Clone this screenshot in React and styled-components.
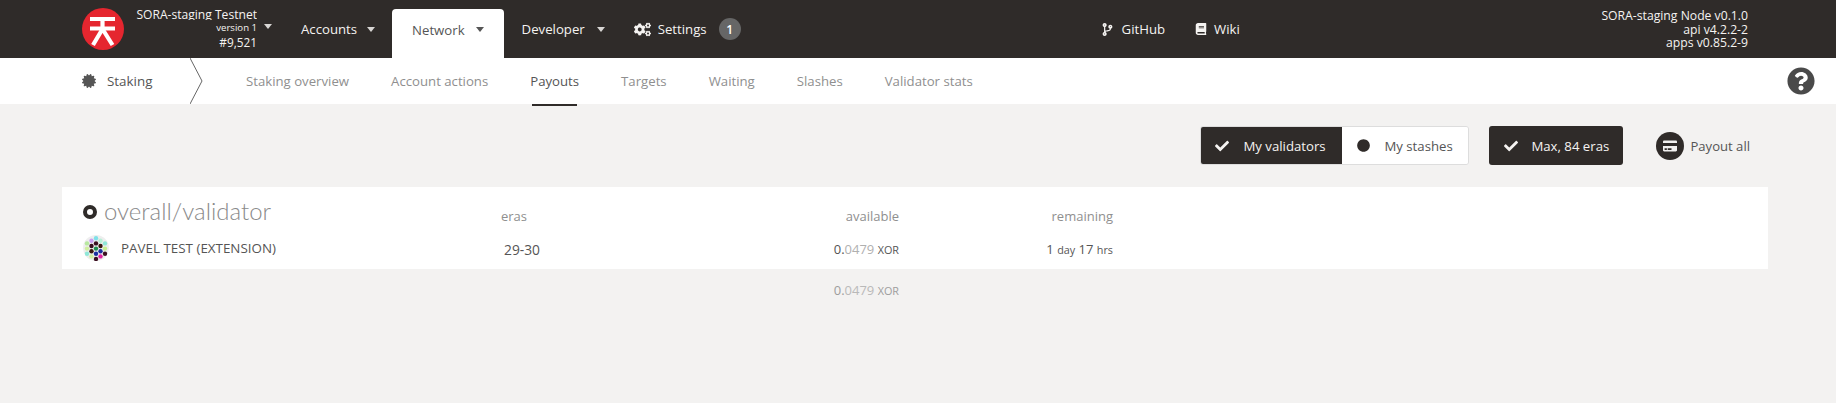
import React from 'react';
import styled, { createGlobalStyle } from 'styled-components';
import { FaCogs, FaCodeBranch, FaBook, FaCertificate, FaQuestionCircle, FaCreditCard, FaCheck, FaCircle } from 'react-icons/fa';

const Global = createGlobalStyle`
  html, body { margin: 0; padding: 0; background: #f3f2f1; }
  body { font-family: "Open Sans", "Noto Sans", sans-serif; font-size: 13.2px; color: #555; }
  * { box-sizing: border-box; }
`;

const Page = styled.div`
  width: 1836px;
  height: 403px;
  overflow: hidden;
  position: relative;
`;

const TopBar = styled.header`
  height: 58px;
  background: #2f2b29;
  color: #f5f3f1;
  display: flex;
  align-items: flex-end;
  padding-left: 82px;
  padding-right: 88px;
`;

const Logo = styled.svg`
  width: 42px;
  height: 42px;
  margin-bottom: 8px;
  flex: none;
`;

const ChainInfo = styled.div`
  width: 133px;
  height: 58px;
  padding-top: 7px;
  text-align: right;
  flex: none;
  position: relative;
`;

const ChainName = styled.div`
  font-size: 12.1px;
  line-height: 15px;
  white-space: nowrap;
  height: 13px;
  overflow: hidden;
  margin-left: -10px;
`;

const ChainLine = styled.div`
  font-size: ${p => p.$size}px;
  line-height: 15px;
  white-space: nowrap;
`;

const Caret = styled.i`
  display: inline-block;
  flex: none;
  width: 0;
  height: 0;
  border-left: 4px solid transparent;
  border-right: 4px solid transparent;
  border-top: 5px solid ${p => p.$dark ? '#555' : '#d8d6d4'};
`;

const ChainCaret = styled(Caret)`
  margin: 24px 0 0 7px;
  align-self: flex-start;
`;

const NavItem = styled.div`
  height: ${p => p.$active ? '49px' : '58px'};
  display: flex;
  align-items: center;
  gap: ${p => p.$gap || 10}px;
  margin-left: ${p => p.$ml || 0}px;
  padding: 0 ${p => p.$pr || 0}px 0 ${p => p.$pl || 0}px;
  font-size: 13.2px;
  white-space: nowrap;
  flex: none;
  background: ${p => p.$active ? '#fff' : 'transparent'};
  color: ${p => p.$active ? '#555' : '#f5f3f1'};
  border-radius: ${p => p.$active ? '4px 4px 0 0' : '0'};
`;

const ActiveLabel = styled.span`
  position: relative;
  top: -4px;
  display: inline-flex;
  align-items: center;
  gap: 11px;
`;

const Badge = styled.span`
  width: 22px;
  height: 22px;
  border-radius: 50%;
  background: #666;
  color: #fff;
  font-size: 12px;
  font-weight: 600;
  display: flex;
  align-items: center;
  justify-content: center;
  margin-left: 5px;
`;

const Spacer = styled.div`
  flex: 1;
`;

const NodeInfo = styled.div`
  text-align: right;
  font-size: 12.2px;
  line-height: 13.5px;
  align-self: flex-start;
  padding-top: 9px;
  white-space: nowrap;
`;

const SubBar = styled.nav`
  height: 46px;
  background: #fff;
  display: flex;
  align-items: center;
  padding-left: 82px;
  position: relative;
`;

const SectionName = styled.div`
  display: flex;
  align-items: center;
  gap: 11px;
  width: 108px;
  font-size: 13.4px;
  color: #555;
  flex: none;
`;

const Chevron = styled.svg`
  width: 14px;
  height: 46px;
  flex: none;
`;

const Tabs = styled.div`
  display: flex;
  gap: 42px;
  margin-left: 42px;
  height: 100%;
`;

const Tab = styled.div`
  height: 48px;
  line-height: 46px;
  font-size: 13.2px;
  color: ${p => p.$active ? '#555' : '#8f8f8f'};
  white-space: nowrap;
  position: relative;
  ${p => p.$active ? `
    &::after {
      content: "";
      position: absolute;
      left: 2px;
      right: 2px;
      bottom: 0;
      height: 2px;
      background: #2f2b29;
    }` : ''}
`;

const Help = styled.div`
  position: absolute;
  right: 21px;
  top: 9px;
  color: #4a4a4a;
  font-size: 28px;
  line-height: 0;
`;

const Actions = styled.div`
  height: 83px;
  display: flex;
  align-items: flex-start;
  justify-content: flex-end;
  padding: 22px 86px 0 0;
`;

const Toggle = styled.div`
  display: flex;
  height: 39px;
  border-radius: 3px;
  overflow: hidden;
  border: 1px solid #ddd;
  margin-right: 20px;
`;

const ToggleOption = styled.div`
  width: ${p => p.$w}px;
  display: flex;
  align-items: center;
  gap: ${p => p.$gap}px;
  padding-left: ${p => p.$pad}px;
  font-size: 13.2px;
  white-space: nowrap;
  background: ${p => p.$on ? '#2f2b29' : '#fff'};
  color: ${p => p.$on ? '#f5f3f1' : '#555'};
`;

const DarkButton = styled(ToggleOption)`
  height: 39px;
  border-radius: 3px;
  margin-right: 33px;
`;

const PayoutAll = styled.div`
  display: flex;
  align-items: center;
  gap: 6px;
  height: 39px;
  font-size: 13.1px;
  color: #555;
  white-space: nowrap;
`;

const PayoutIcon = styled.span`
  width: 28px;
  height: 28px;
  border-radius: 50%;
  background: #2f2b29;
  color: #f2f1f0;
  display: flex;
  align-items: center;
  justify-content: center;
  font-size: 14px;
`;

const Card = styled.section`
  margin: 0 68px 0 62px;
  background: #fff;
  height: 82px;
  padding-left: 21px;
`;

const Grid = styled.div`
  display: grid;
  grid-template-columns: 418px 248px 150px 214px;
  align-items: center;
`;

const HeadRow = styled(Grid)`
  height: 42px;
`;

const DataRow = styled(Grid)`
  height: 40px;
`;

const FootRow = styled(Grid)`
  margin: 0 68px 0 62px;
  padding-left: 21px;
  height: 42px;
`;

const Title = styled.div`
  display: flex;
  align-items: center;
  gap: 7px;
  font-size: 24px;
  font-weight: 300;
  font-family: "Lato", "Open Sans", sans-serif;
  color: #8a8a8a;
  white-space: nowrap;
  line-height: 30px;
  padding-top: 5px;
`;

const Ring = styled.span`
  width: 14px;
  height: 14px;
  border-radius: 50%;
  border: 4px solid #2f2b29;
  flex: none;
  position: relative;
  top: 1px;
`;

const HeadCell = styled.div`
  font-size: 13px;
  color: #8f8f8f;
  text-align: ${p => p.$right ? 'right' : 'left'};
  padding-top: 16px;
`;

const Name = styled.div`
  display: flex;
  align-items: center;
  gap: 12px;
  font-size: 13.4px;
  color: #555;
  white-space: nowrap;
  position: relative;
  top: -1px;
`;

const Eras = styled.div`
  font-size: 13.8px;
  padding-left: 3px;
  color: #555;
`;

const Value = styled.div`
  text-align: right;
  font-size: 13px;
  color: ${p => p.$muted ? '#8f8f8f' : '#555'};
  white-space: nowrap;
  opacity: ${p => p.$muted ? 0.85 : 1};
`;

const Faint = styled.span`
  color: #b0b0b0;
`;

const Small = styled.span`
  font-size: 10.8px;
`;

const Dots = [
  [13, 3.2, '#7fe0e8'], [8.5, 5.8, '#c9a0f0'], [17.5, 5.8, '#b8f0d8'],
  [4, 8.4, '#b8e8a0'], [13, 8.4, '#3a0f20'], [22, 8.4, '#8fe8d8'],
  [8.5, 11, '#3a0f20'], [17.5, 11, '#3a1a10'], [4, 13.6, '#d0f0a0'],
  [13, 13.6, '#1f8f50'], [22, 13.6, '#c8f090'], [8.5, 16.2, '#3a1a10'],
  [17.5, 16.2, '#1a30a0'], [4, 18.8, '#90e8d8'], [13, 18.8, '#1a30a0'],
  [22, 18.8, '#3a0f20'], [8.5, 21.4, '#d0f0a0'], [17.5, 21.4, '#e020a0'],
  [13, 24, '#3a0f20'],
];

const Identicon = () => (
  <svg width="26" height="26" viewBox="0 0 26 26" style={{ flex: 'none' }}>
    <circle cx="13" cy="13" r="13" fill="#eeeeee" />
    {Dots.map(([x, y, c], i) => <circle key={i} cx={x} cy={y} r="2.2" fill={c} />)}
  </svg>
);

export default function App() {
  return (
    <Page>
      <Global />
      <TopBar>
        <Logo viewBox="0 0 42 42">
          <circle cx="21" cy="21" r="21" fill="#e5262f" />
          <path d="M8 11h25M8 20.5h25" stroke="#fff" strokeWidth="4.2" fill="none" />
          <path d="M20.5 11v10L11 37M20.5 21l10 16" stroke="#fff" strokeWidth="4.2" fill="none" />
        </Logo>
        <ChainInfo>
          <ChainName>SORA-staging Testnet</ChainName>
          <ChainLine $size={9.6}>version 1</ChainLine>
          <ChainLine $size={11.8}>#9,521</ChainLine>
        </ChainInfo>
        <ChainCaret />
        <NavItem $ml={29}>Accounts<Caret /></NavItem>
        <NavItem $ml={17} $active $pl={20} $pr={20}>
          <ActiveLabel>Network<Caret $dark /></ActiveLabel>
        </NavItem>
        <NavItem $ml={18} $gap={12}>Developer<Caret /></NavItem>
        <NavItem $ml={29} $gap={7}><FaCogs size={17} />Settings<Badge>1</Badge></NavItem>
        <NavItem $ml={360} $gap={8}><FaCodeBranch size={13} />GitHub</NavItem>
        <NavItem $ml={30} $gap={7}><FaBook size={12} />Wiki</NavItem>
        <Spacer />
        <NodeInfo>
          SORA-staging Node v0.1.0<br />
          api v4.2.2-2<br />
          apps v0.85.2-9
        </NodeInfo>
      </TopBar>

      <SubBar>
        <SectionName><FaCertificate size={14} />Staking</SectionName>
        <Chevron viewBox="0 0 14 46">
          <path d="M0 0 L12 23 L0 46" fill="none" stroke="#666" strokeWidth="1" />
        </Chevron>
        <Tabs>
          <Tab>Staking overview</Tab>
          <Tab>Account actions</Tab>
          <Tab $active>Payouts</Tab>
          <Tab>Targets</Tab>
          <Tab>Waiting</Tab>
          <Tab>Slashes</Tab>
          <Tab>Validator stats</Tab>
        </Tabs>
        <Help><FaQuestionCircle /></Help>
      </SubBar>

      <Actions>
        <Toggle>
          <ToggleOption $on $w={141} $pad={14} $gap={14}><FaCheck size={14} />My validators</ToggleOption>
          <ToggleOption $w={126} $pad={15} $gap={14}><FaCircle size={13} color="#2f2b29" />My stashes</ToggleOption>
        </Toggle>
        <DarkButton $on $w={134} $pad={15} $gap={13}><FaCheck size={14} />Max, 84 eras</DarkButton>
        <PayoutAll><PayoutIcon><FaCreditCard /></PayoutIcon>Payout all</PayoutAll>
      </Actions>

      <Card>
        <HeadRow>
          <Title><Ring />overall/validator</Title>
          <HeadCell>eras</HeadCell>
          <HeadCell $right>available</HeadCell>
          <HeadCell $right>remaining</HeadCell>
        </HeadRow>
        <DataRow>
          <Name><Identicon />PAVEL TEST (EXTENSION)</Name>
          <Eras>29-30</Eras>
          <Value>0.<Faint>0479</Faint> <Small>XOR</Small></Value>
          <Value>1 <Small>day</Small> 17 <Small>hrs</Small></Value>
        </DataRow>
      </Card>
      <FootRow>
        <div />
        <div />
        <Value $muted>0.<Faint>0479</Faint> <Small>XOR</Small></Value>
      </FootRow>
    </Page>
  );
}
